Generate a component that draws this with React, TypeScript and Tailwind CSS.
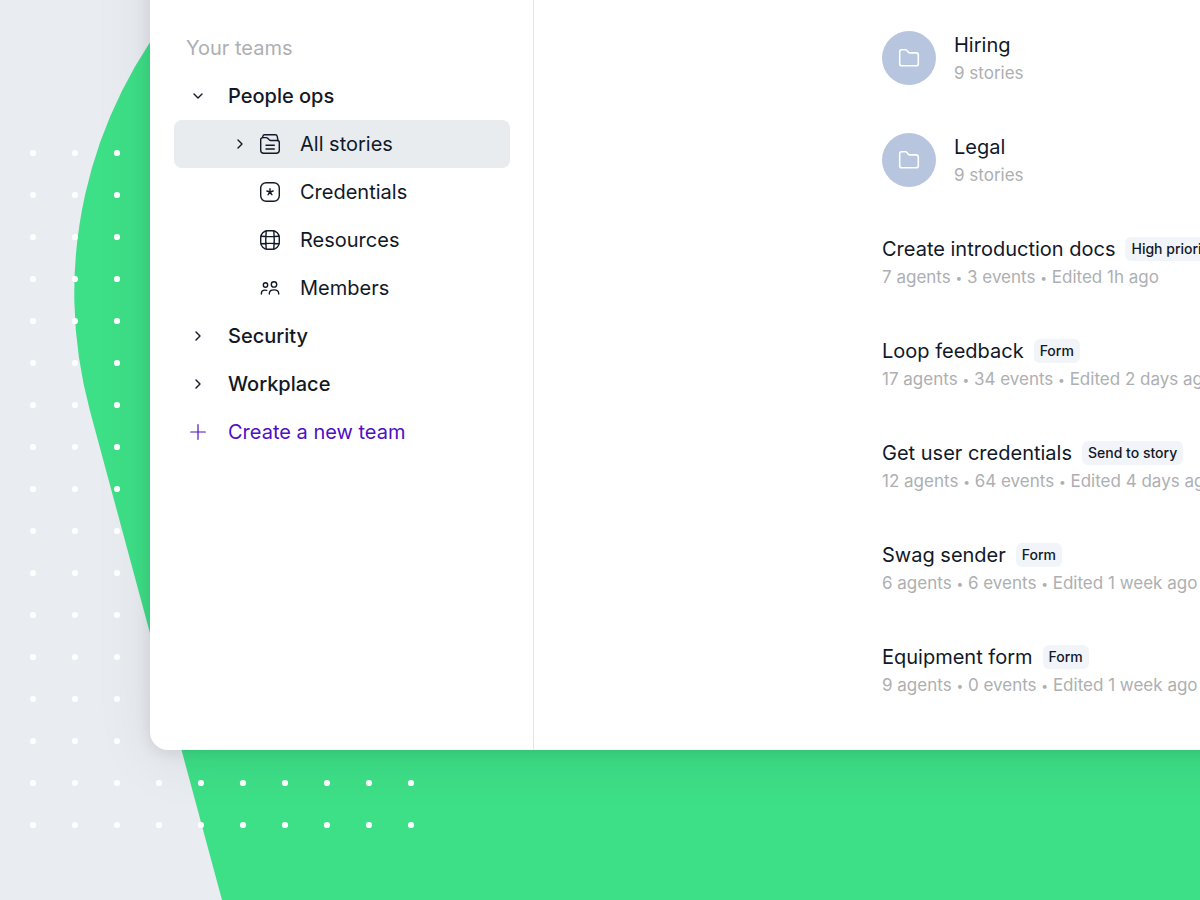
import { useState } from 'react';
import type { ReactNode } from 'react';

type Folder = { id: number; name: string; stories: number };

type Story = {
    id: number;
    name: string;
    tag: string;
    agents: number;
    events: number;
    edited: string;
};

const folders: Folder[] = [
    { id: 1, name: 'Hiring', stories: 9 },
    { id: 2, name: 'Legal', stories: 9 },
];

const stories: Story[] = [
    { id: 1, name: 'Create introduction docs', tag: 'High priority', agents: 7, events: 3, edited: '1h ago' },
    { id: 2, name: 'Loop feedback', tag: 'Form', agents: 17, events: 34, edited: '2 days ago' },
    { id: 3, name: 'Get user credentials', tag: 'Send to story', agents: 12, events: 64, edited: '4 days ago' },
    { id: 4, name: 'Swag sender', tag: 'Form', agents: 6, events: 6, edited: '1 week ago' },
    { id: 5, name: 'Equipment form', tag: 'Form', agents: 9, events: 0, edited: '1 week ago' },
];

const Chevron = ({ open = false }: { open?: boolean }) => (
    <svg className={`size-4 shrink-0 ${open ? 'rotate-90' : ''}`} viewBox="0 0 16 16" fill="none" stroke="currentColor" strokeWidth="1.4" strokeLinecap="round" strokeLinejoin="round">
        <path d="M6 4l4 4-4 4" />
    </svg>
);

const StoriesIcon = () => (
    <svg className="size-6 shrink-0" viewBox="0 0 24 24" fill="none" stroke="currentColor" strokeWidth="1.4" strokeLinecap="round" strokeLinejoin="round">
        <path d="M2.7 7.6a2 2 0 0 1 2-2h3.5c.6 0 1.1.2 1.5.6l1.5 1.6c.4.4.9.7 1.5.7h6.6a2 2 0 0 1 2 2v7.8a3 3 0 0 1-3 3H5.700a3 3 0 0 1-3-3z" />
        <path d="M4.600 5.600l.2-1.300c.2-1 .8-1.600 1.800-1.600h10.800c1 0 1.600.6 1.800 1.600l.8 4.200" />
        <path d="M8 13.3h8.3M8 17h8.3" />
    </svg>
);

const CredentialsIcon = () => (
    <svg className="size-6 shrink-0" viewBox="0 0 24 24" fill="none" stroke="currentColor" strokeWidth="1.4" strokeLinecap="round" strokeLinejoin="round">
        <rect x="2.7" y="2.7" width="18.6" height="18.6" rx="5.5" />
        <path d="M12 12V8.7M12 12l3.1-1M12 12l1.900 2.700M12 12l-1.900 2.700M12 12l-3.100-1" />
    </svg>
);

const ResourcesIcon = () => (
    <svg className="size-6 shrink-0" viewBox="0 0 24 24" fill="none" stroke="currentColor" strokeWidth="1.4" strokeLinecap="round" strokeLinejoin="round">
        <rect x="2.7" y="2.7" width="18.6" height="18.6" rx="7" />
        <path d="M3 8.2c5.9.6 12.1.6 18 0M3 15.8c5.9-.6 12.1-.6 18 0M8.2 3c-.6 5.900-.6 12.100 0 18M15.800 3c.6 5.900.6 12.100 0 18" />
    </svg>
);

const MembersIcon = () => (
    <svg className="size-6 shrink-0" viewBox="0 0 24 24" fill="none" stroke="currentColor" strokeWidth="1.4" strokeLinecap="round" strokeLinejoin="round">
        <circle cx="7.5" cy="9" r="2.2" />
        <circle cx="16" cy="8.4" r="2.7" />
        <path d="M3.4 18v-.6c0-2 1.5-3.3 3.5-3.3.7 0 1.300.1 1.800.3M11.300 18v-.4c0-2.200 2-3.700 4.700-3.700s4.700 1.500 4.700 3.700v.4" />
    </svg>
);

const FolderIcon = () => (
    <svg className="size-6" viewBox="0 0 24 24" fill="none" stroke="currentColor" strokeWidth="1.6" strokeLinecap="round" strokeLinejoin="round">
        <path d="M2.7 5.7c0-1.1.8-1.9 1.9-1.9h4c.5 0 1 .2 1.3.6l1.6 2c.3.3.7.5 1.2.5h6.5c1.2 0 2.1.9 2.1 2.1v8.700c0 1.200-.9 2.100-2.100 2.100H4.800c-1.200 0-2.100-.9-2.100-2.100z" />
    </svg>
);

const Backdrop = () => (
    <svg className="absolute inset-0 h-full w-full" viewBox="0 0 1200 900" preserveAspectRatio="xMinYMin slice" aria-hidden="true">
        <defs>
            <pattern id="dots" x="12" y="132" width="42" height="42" patternUnits="userSpaceOnUse">
                <circle cx="21" cy="21" r="3.1" fill="#fff" />
            </pattern>
        </defs>
        <path d="M222 900L90 411A452 452 0 0 1 182 0H1200V900Z" fill="#3ddf87" />
        <rect x="12" y="132" width="420" height="714" fill="url(#dots)" />
    </svg>
);

type TeamButtonProps = { name: string; open: boolean; onToggle: () => void };

const TeamButton = ({ name, open, onToggle }: TeamButtonProps) => (
    <button type="button" aria-expanded={open} onClick={onToggle} className="flex h-12 w-full cursor-pointer items-center gap-[22px] px-4 text-left font-medium">
        <Chevron open={open} />
        {name}
    </button>
);

type TeamLinkProps = { name: string; icon: ReactNode; active?: boolean };

const TeamLink = ({ name, icon, active = false }: TeamLinkProps) => (
    <a
        href="#"
        aria-current={active ? 'page' : undefined}
        className={`flex h-12 items-center rounded-lg ${active ? 'bg-[#e8ecef] pl-[58px]' : 'pl-[84px]'}`}
    >
        {active && <span className="mr-[10px]"><Chevron /></span>}
        {icon}
        <span className="ml-[18px]">{name}</span>
    </a>
);

const Sidebar = () => {
    const [openTeam, setOpenTeam] = useState('People ops');

    const toggle = (name: string) => {
        setOpenTeam(openTeam === name ? '' : name);
    };

    return (
        <nav aria-label="Your teams" className="w-96 shrink-0 border-r border-[#e2e4e7] pt-6 pr-[23px] pl-6 text-xl text-[#111827]">
            <h2 className="flex h-12 items-center px-3 text-[#adafb2]">Your teams</h2>
            <TeamButton name="People ops" open={openTeam === 'People ops'} onToggle={() => toggle('People ops')} />
            {openTeam === 'People ops' && (
                <div>
                    <TeamLink name="All stories" icon={<StoriesIcon />} active />
                    <TeamLink name="Credentials" icon={<CredentialsIcon />} />
                    <TeamLink name="Resources" icon={<ResourcesIcon />} />
                    <TeamLink name="Members" icon={<MembersIcon />} />
                </div>
            )}
            <TeamButton name="Security" open={openTeam === 'Security'} onToggle={() => toggle('Security')} />
            <TeamButton name="Workplace" open={openTeam === 'Workplace'} onToggle={() => toggle('Workplace')} />
            <button type="button" className="flex h-12 w-full cursor-pointer items-center gap-[22px] px-4 text-left text-[#4f0fc4]">
                <svg className="size-4 shrink-0" viewBox="0 0 16 16" fill="none" stroke="currentColor" strokeWidth="1.2" strokeLinecap="round">
                    <path d="M8 .7v14.6M.7 8h14.6" />
                </svg>
                Create a new team
            </button>
        </nav>
    );
};

const FolderRow = ({ name, stories: count }: Folder) => (
    <li className="flex gap-[18px]">
        <span className="flex size-[54px] items-center justify-center rounded-full bg-[#b7c5de] text-white">
            <FolderIcon />
        </span>
        <div>
            <a href="#" className="block text-xl leading-7">{name}</a>
            <p className="text-[17px] leading-7 text-[#adafb2]">{count} stories</p>
        </div>
    </li>
);

const Bullet = () => <span className="align-middle text-xs leading-none">•</span>;

const StoryRow = ({ name, tag, agents, events, edited }: Story) => (
    <li className="whitespace-nowrap">
        <div className="flex h-7 items-center gap-[10px]">
            <a href="#" className="text-xl leading-7">{name}</a>
            <span className="rounded-md bg-[#f1f4f8] px-[6px] text-sm leading-6 font-medium">{tag}</span>
        </div>
        <p className="text-[17px] leading-7 text-[#adafb2]">
            {agents} agents <Bullet /> {events} events <Bullet /> Edited {edited}
        </p>
    </li>
);

export default function App() {
    return (
        <div className="relative flex min-h-screen overflow-hidden bg-[#e9ecf1] pb-[150px] pl-[150px] font-[Inter,sans-serif]">
            <Backdrop />
            {/* the panel bleeds off the top and right so its shadow stays even along the visible edges */}
            <div className="relative -mt-24 -mr-24 flex min-w-0 flex-1 rounded-bl-[18px] bg-white pt-24 shadow-[0_8px_60px_rgba(0,0,0,0.08),0_2px_16px_rgba(0,0,0,0.1)]">
                <Sidebar />
                <main className="min-w-0 flex-1 pt-[31px] pb-12 pl-[348px] text-[#111827]">
                    <ul className="flex flex-col gap-[46px]">
                        {folders.map((folder) => (
                            <FolderRow key={folder.id} {...folder} />
                        ))}
                        {stories.map((story) => (
                            <StoryRow key={story.id} {...story} />
                        ))}
                    </ul>
                </main>
            </div>
        </div>
    );
}
